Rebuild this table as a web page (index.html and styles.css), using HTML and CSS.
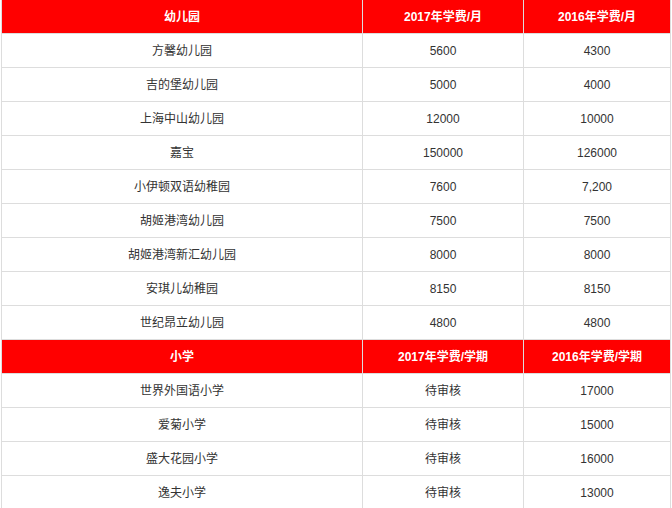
FILE: index.html
```html
<!DOCTYPE html>
<html lang="zh-CN">
<head>
<meta charset="utf-8">
<title>幼儿园与小学学费</title>
<link rel="stylesheet" href="styles.css">
</head>
<body>
<table class="fees">
  <colgroup>
    <col class="c-name">
    <col class="c-2017">
    <col class="c-2016">
  </colgroup>
  <tbody>
    <tr class="head"><td>幼儿园</td><td>2017年学费/月</td><td>2016年学费/月</td></tr>
    <tr><td>方馨幼儿园</td><td>5600</td><td>4300</td></tr>
    <tr><td>吉的堡幼儿园</td><td>5000</td><td>4000</td></tr>
    <tr><td>上海中山幼儿园</td><td>12000</td><td>10000</td></tr>
    <tr><td>嘉宝</td><td>150000</td><td>126000</td></tr>
    <tr><td>小伊顿双语幼稚园</td><td>7600</td><td>7,200</td></tr>
    <tr><td>胡姬港湾幼儿园</td><td>7500</td><td>7500</td></tr>
    <tr><td>胡姬港湾新汇幼儿园</td><td>8000</td><td>8000</td></tr>
    <tr><td>安琪儿幼稚园</td><td>8150</td><td>8150</td></tr>
    <tr><td>世纪昂立幼儿园</td><td>4800</td><td>4800</td></tr>
    <tr class="head"><td>小学</td><td>2017年学费/学期</td><td>2016年学费/学期</td></tr>
    <tr><td>世界外国语小学</td><td>待审核</td><td>17000</td></tr>
    <tr><td>爱菊小学</td><td>待审核</td><td>15000</td></tr>
    <tr><td>盛大花园小学</td><td>待审核</td><td>16000</td></tr>
    <tr><td>逸夫小学</td><td>待审核</td><td>13000</td></tr>
  </tbody>
</table>
</body>
</html>
```

FILE: styles.css
```css
html, body {
  margin: 0;
  padding: 0;
  background: #ffffff;
}

body {
  font-family: "Liberation Sans", "Noto Sans CJK SC", sans-serif;
  font-size: 12px;
  color: #333333;
}

.fees {
  border-collapse: collapse;
  table-layout: fixed;
  width: 669px;
  margin: -1px 0 0 1px;
}

.c-name { width: 361px; }
.c-2017 { width: 161px; }
.c-2016 { width: 147px; }

.fees td {
  height: 33px;
  padding: 0;
  border: 1px solid #dddddd;
  text-align: center;
  vertical-align: middle;
  line-height: 16px;
  white-space: nowrap;
}

.fees tr.head td {
  background: #ff0000;
  color: #ffffff;
  font-weight: bold;
  border-top-color: #ff0000;
  border-bottom-color: #dddddd;
}
```
